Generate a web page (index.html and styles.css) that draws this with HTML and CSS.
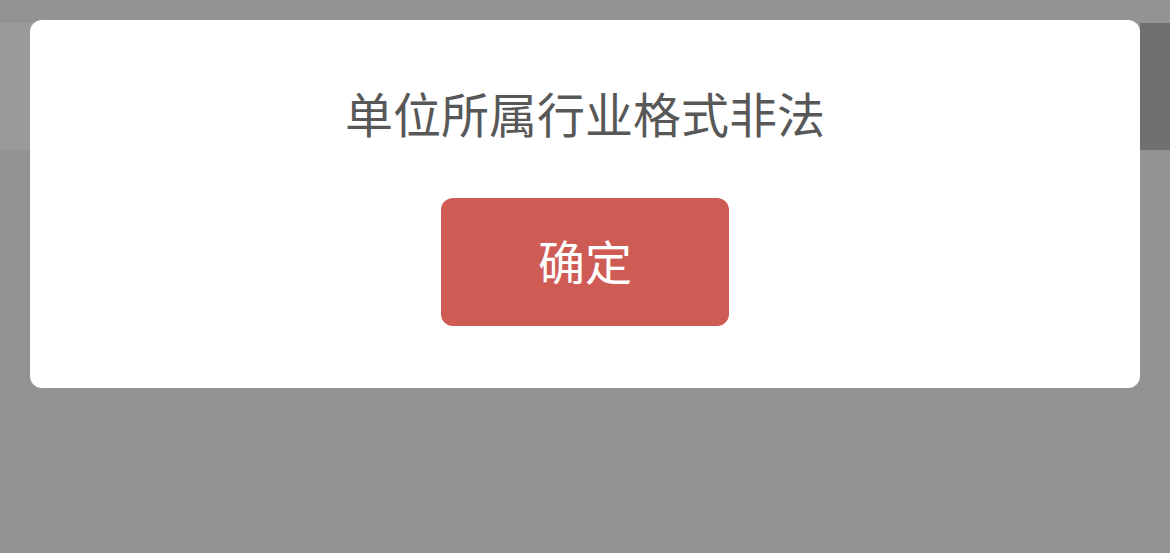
FILE: index.html
```html
<!DOCTYPE html>
<html lang="zh-CN">
<head>
  <meta charset="UTF-8" />
  <title>提示</title>
  <meta name="viewport" content="width=device-width, initial-scale=1" />
  <link rel="stylesheet" href="styles.css">
</head>
<body>

  <!-- PAGE UNDER THE MASK -->
  <div class="page">
    <div class="topbar"></div>
    <div class="header">
      <div class="header-main"></div>
      <div class="header-side"></div>
    </div>
  </div>

  <!-- ALERT DIALOG -->
  <div class="mask">
    <div class="dialog">
      <p class="dialog-msg">单位所属行业格式非法</p>
      <button class="dialog-btn">确定</button>
    </div>
  </div>

</body>
</html>
```

FILE: styles.css
```css
html, body {
  margin: 0;
  height: 100%;
}

body {
  font-family: "Noto Sans CJK SC", "Noto Sans", sans-serif;
  background-color: #939393;
  overflow: hidden;
}

.topbar {
  height: 23px;
  background-color: #939393;
}

.header {
  display: flex;
  height: 127px;
}

.header-main {
  flex: 1;
  background-color: #9a9a9a;
}

.header-side {
  width: 30px;
  background-color: #707070;
}

.mask {
  position: absolute;
  left: 0;
  top: 0;
  right: 0;
  bottom: 0;
}

.dialog {
  position: absolute;
  left: 30px;
  top: 20px;
  width: 1110px;
  height: 368px;
  box-sizing: border-box;
  background-color: #fff;
  border-radius: 12px;
  display: flex;
  flex-direction: column;
  align-items: center;
  padding-top: 64px;
}

.dialog-msg {
  margin: 0;
  font-size: 48px;
  line-height: 56px;
  color: #585858;
}

.dialog-btn {
  margin-top: 58px;
  width: 288px;
  height: 128px;
  padding: 0 0 6px;
  border: none;
  border-radius: 12px;
  background-color: #cf5b55;
  color: #fff;
  font-family: inherit;
  font-size: 47px;
  cursor: pointer;
}
```
